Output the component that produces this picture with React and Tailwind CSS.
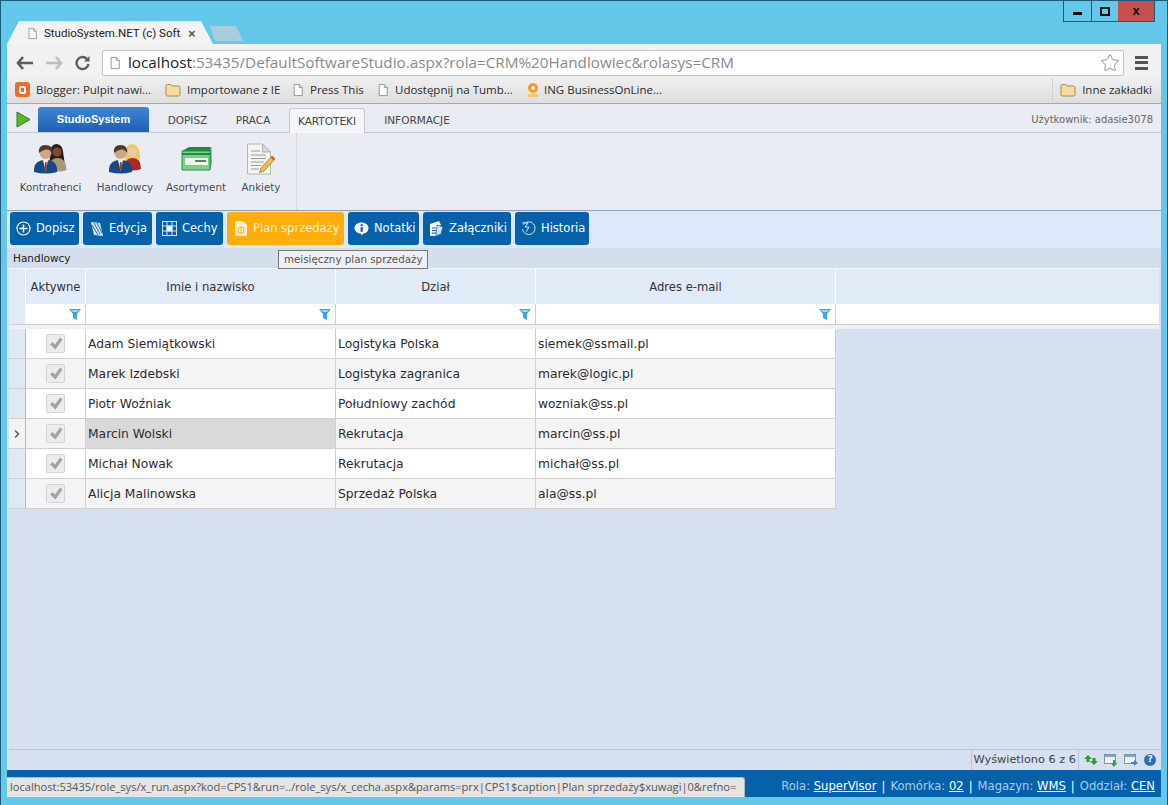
import { ChevronRight, Star } from "lucide-react"

const ui = "font-['Open_Sans','Noto_Sans',sans-serif]"
const app = "font-['DejaVu_Sans',sans-serif]"

const rows = [
  ["Adam Siemiątkowski", "Logistyka Polska", "siemek@ssmail.pl"],
  ["Marek Izdebski", "Logistyka zagranica", "marek@logic.pl"],
  ["Piotr Woźniak", "Południowy zachód", "wozniak@ss.pl"],
  ["Marcin Wolski", "Rekrutacja", "marcin@ss.pl"],
  ["Michał Nowak", "Rekrutacja", "michał@ss.pl"],
  ["Alicja Malinowska", "Sprzedaż Polska", "ala@ss.pl"],
]

function PageIcon({ size = 14 }) {
  return (
    <svg width={size} height={size + 2} viewBox="0 0 14 16" className="shrink-0">
      <path d="M2.5 1.5h6l3.500 3.500v9.500h-9.500z" fill="#fafafa" stroke="#8a8a8a" />
      <path d="M8.500 1.500v3.500h3.500" fill="#e8e8e8" stroke="#8a8a8a" />
    </svg>
  )
}

function FolderIcon() {
  return (
    <svg width="16" height="14" viewBox="0 0 16 14" className="shrink-0">
      <path d="M1 3q0-1.500 1.500-1.500h3l1.500 1.500h6.500q1.500 0 1.500 1.500v7q0 1.500-1.500 1.500h-11q-1.500 0-1.500-1.500z" fill="#f6dc9c" stroke="#a6894e" />
    </svg>
  )
}

function Bookmark({ icon, label, className = "" }) {
  return (
    <div className={"flex items-center gap-[6px] shrink-0 " + className}>
      {icon}
      <span className="text-[11.500px] text-[#2b2b2b] whitespace-nowrap">{label}</span>
    </div>
  )
}

function PeopleIcon({ blond }) {
  return (
    <svg width="33" height="31" viewBox="0 0 33 31">
      {blond ? (
        <>
          <path d="M16 13q0-12 7-12t8 12l-1 6h-13z" fill="#e9c764" />
          <circle cx="23.500" cy="9" r="4.500" fill="#eec9a8" />
          <path d="M15 26q0-11 8.500-11t8.500 11q-8 3-17 0z" fill="#a82a2a" />
        </>
      ) : (
        <>
          <path d="M16 12q0-11 6.500-11t7 11l1 7h-15z" fill="#2c1d18" />
          <circle cx="23" cy="9" r="4.500" fill="#7a4a32" />
          <path d="M15 27q0-12 8.500-12t9 12q-8 3-17.500 0z" fill="#a89878" />
        </>
      )}
      <circle cx="11.500" cy="10" r="6" fill="#d2a386" />
      <path d="M5 10q-1-8 6.500-8t6.500 8q-2-4-6-3.500t-7 3.500z" fill="#4a3a30" />
      <path d="M0 29q-1-12 11.500-12t11.500 12q-11 3-23 0z" fill="#174a84" />
      <path d="M9 17h5l-2.500 11z" fill="#eef2f6" />
      <path d="M11 19h1.500l.5 6-1.200 2-1.300-2z" fill="#b02f2f" />
    </svg>
  )
}

function BoxIcon() {
  return (
    <svg width="31" height="25" viewBox="0 0 31 25">
      <path d="M1 5l7-4h22l-1 4z" fill="#1f8a45" />
      <path d="M1 5h28v19h-28z" fill="#7bd088" stroke="#2c8c4a" />
      <path d="M29 5l1.500-4v17l-1.500 6z" fill="#2f9a52" />
      <rect x="1" y="7" width="28" height="2" fill="#1f8a45" />
      <rect x="4" y="12" width="23" height="7" fill="#eef8ea" />
      <rect x="14" y="14" width="11" height="2" fill="#5c7d66" />
    </svg>
  )
}

function DocIcon() {
  return (
    <svg width="30" height="32" viewBox="0 0 30 32">
      <path d="M1.500 1h15l8 8v22h-23z" fill="#f4f4f4" stroke="#b5b5b5" />
      <path d="M16.500 1v8h8z" fill="#d8d8d8" stroke="#b5b5b5" />
      <path d="M5 8h9M5 12h15M5 15.500h15M5 19h13M5 22.500h10M5 26h8" stroke="#9a9a9a" />
      <path d="M26 13l3 3-11 12-4.500 1.500 1.500-4.500z" fill="#f0c040" stroke="#8a6a20" strokeWidth=".7" />
      <path d="M26 13l3 3-1.500 1.500-3-3z" fill="#d8584c" />
    </svg>
  )
}

function RibbonItem({ icon, label, className = "" }) {
  return (
    <div className={"flex flex-col items-center " + className}>
      <div className="h-[32px] flex items-start justify-center">{icon}</div>
      <span className="mt-[5px] text-[10.300px] text-[#4a4a4a] whitespace-nowrap">{label}</span>
    </div>
  )
}

const btnIcons = {
  plus: (
    <svg width="15" height="15" viewBox="0 0 15 15" fill="none" stroke="#fff" strokeWidth="1.200">
      <circle cx="7.500" cy="7.500" r="6.500" />
      <path d="M7.500 3.500v8M3.500 7.500h8" strokeWidth="1.500" />
    </svg>
  ),
  edit: (
    <svg width="14" height="16" viewBox="0 0 14 16">
      <path d="M1 1l9 1 3 13-9-1z" fill="#d6e6f4" />
      <path d="M4 2l6 11M7 2l5 10M2 4l6 10" stroke="#1f6fb0" />
    </svg>
  ),
  grid: (
    <svg width="15" height="15" viewBox="0 0 15 15" fill="none" stroke="#cfe3f3">
      <rect x=".5" y=".5" width="14" height="14" />
      <path d="M5 .5v14M10 .5v14M.5 5h14M.5 10h14" />
      <rect x="5" y="5" width="5" height="5" fill="#fff" />
    </svg>
  ),
  plan: (
    <svg width="12" height="15" viewBox="0 0 12 15">
      <path d="M0 0h8l4 4v11h-12z" fill="#fdf0cf" />
      <circle cx="6" cy="9" r="3" fill="none" stroke="#ffad0d" />
      <path d="M6 7.500v3" stroke="#ffad0d" />
    </svg>
  ),
  note: (
    <svg width="16" height="16" viewBox="0 0 16 16">
      <path d="M8 1c4 0 7.500 2.500 7.500 6s-3 6-6 6l-1.500 2.500v-2.500c-4 0-7.500-2.500-7.500-6s3.500-6 7.500-6z" fill="#fff" />
      <rect x="7" y="6" width="2.400" height="5" fill="#0561aa" />
      <rect x="7" y="3" width="2.400" height="2" fill="#0561aa" />
    </svg>
  ),
  clip: (
    <svg width="15" height="17" viewBox="0 0 15 17">
      <path d="M1 4l9-3 2 4-4 2v9l-7 0z" fill="#fff" />
      <path d="M8 5l6 2-2 7-5 2z" fill="#cfe3f3" stroke="#0561aa" strokeWidth=".7" />
      <path d="M3 8h4M3 10.500h4M3 13h4" stroke="#0561aa" />
    </svg>
  ),
  hist: (
    <svg width="16" height="16" viewBox="0 0 16 16" fill="none" stroke="#e4eff8">
      <path d="M2.500 3.500a6.800 6.800 0 1 1-1 4.500" />
      <path d="M1 1.500h6.500l-3 4.500h4l-3 5" />
    </svg>
  ),
}

function ActionBtn({ icon, label, width, active }) {
  return (
    <div className={"h-[33px] rounded-[3px] flex items-center pl-[6px] gap-[5px] text-[11.500px] " + width + " " + (active ? "bg-[#ffad0d] text-[#fdf3dc]" : "bg-[#0561aa] text-white")}>
      <span className="w-[15px] flex justify-center">{btnIcons[icon]}</span>
      <span className="whitespace-nowrap">{label}</span>
    </div>
  )
}

function Funnel() {
  return (
    <svg width="12" height="11" viewBox="0 0 12 11" className="absolute right-[4px] top-[5px]">
      <path d="M0 0h12l-4 5v6l-4-2v-4z" fill="#3aa6dc" />
      <path d="M2 1h8l-2 2h-4z" fill="#9bdcf5" />
    </svg>
  )
}

function HeadCell({ label, width }) {
  return (
    <div className={"shrink-0 h-full pt-[2px] flex items-center justify-center border-r border-white text-[11.600px] text-[#333] " + width}>{label}</div>
  )
}

function FilterCell({ width }) {
  return <div className={"relative shrink-0 h-full bg-white border-r border-[#d0d0d0] " + width}><Funnel /></div>
}

function GridRow({ row, index }) {
  const selected = index === 3
  const bg = index % 2 === 1 ? "bg-[#f4f4f4]" : "bg-white"
  return (
    <div className={"flex h-[30px] text-[12.300px] text-[#2c2c2c] border-b border-[#d0d0d0] " + bg}>
      <div className={"w-[17px] shrink-0 flex items-center justify-center border-r border-[#a9bcd4] " + (selected ? "bg-[#f2f2f2]" : "bg-[#dfe9f6]")}>
        {selected && <ChevronRight size={12} strokeWidth={3} className="text-[#555]" />}
      </div>
      <div className="w-[60px] shrink-0 flex items-center justify-center border-r border-[#d0d0d0]">
        <div className="w-[19px] h-[19px] -mt-[1px] rounded-[2px] border border-[#d4d4d4] bg-[#ececec] flex items-center justify-center">
          <svg width="14" height="13" viewBox="0 0 14 13"><path d="M1 7.500l2.500-2.500 2.500 2.500 5-7 2.500 2-7 10z" fill="#a3a3a3" /></svg>
        </div>
      </div>
      <div className={"w-[250px] shrink-0 flex items-center pl-[2px] pt-[1px] border-r border-[#d0d0d0] " + (selected ? "bg-[#d9d9d9]" : "")}>{row[0]}</div>
      <div className="w-[200px] shrink-0 flex items-center pl-[2px] pt-[1px] border-r border-[#d0d0d0]">{row[1]}</div>
      <div className="w-[300px] shrink-0 flex items-center pl-[2px] pt-[1px] border-r border-[#d0d0d0]">{row[2]}</div>
    </div>
  )
}

export default function App() {
  return (
    <div className="relative w-[1168px] h-[805px] overflow-hidden flex flex-col bg-[#64c8ea] border border-[#1d5a78] border-b-0">
      {/* okno */}
      <div className="h-[43px] shrink-0 flex justify-between">
        <div className="flex items-end pl-[6px]">
          <div className="w-[206px] h-[23px] pt-[2px] bg-[#f3f3f3] [clip-path:polygon(0_100%,12px_0,194px_0,206px_100%)] flex items-center pl-[20px]">
            <PageIcon size={11} />
            <span className="ml-[6px] w-[122px] font-['Roboto',sans-serif] text-[11.500px] text-[#222] whitespace-nowrap">StudioSystem.NET (c) Soft</span>
            <span className="ml-[22px] text-[13px] font-bold text-[#555] font-['Liberation_Sans',sans-serif]">×</span>
          </div>
          <div className="w-[33px] h-[15px] -ml-[3px] mb-[3px] bg-[#a9cde0] [clip-path:polygon(0_0,26px_0,33px_100%,5px_100%)]" />
        </div>
        <div className="flex h-[21px] mr-[12px] border border-t-0 border-[#1d5a78] font-['Liberation_Sans',sans-serif]">
          <div className="w-[28px] flex items-center justify-center border-r border-[#1d5a78]">
            <div className="w-[9px] h-[3px] mt-[5px] bg-[#111]" />
          </div>
          <div className="w-[26px] flex items-center justify-center">
            <div className="w-[10px] h-[9px] border-2 border-[#111]" />
          </div>
          <div className="w-[36px] bg-[#c7504c] flex items-center justify-center text-[13px] font-bold text-[#111]">x</div>
        </div>
      </div>

      <div className="flex-1 min-h-0 mx-[6px] flex flex-col bg-[#d6e0ef] rounded-t-[3px]">
        {/* pasek adresu */}
        <div className={"h-[32px] shrink-0 bg-[#f1f1f1] flex items-center pt-[5px] pl-[9px] " + ui}>
          <svg width="18" height="14" viewBox="0 0 18 14"><path d="M7 1L2 7l5 6M2 7h15" fill="none" stroke="#5c5c5c" strokeWidth="2.600" /></svg>
          <svg width="18" height="14" viewBox="0 0 18 14" className="ml-[11px]"><path d="M11 1l5 6-5 6M16 7H1" fill="none" stroke="#bdbdbd" strokeWidth="2.600" /></svg>
          <svg width="16" height="16" viewBox="0 0 16 16" className="ml-[12px]"><path d="M13.500 9a6 6 0 1 1-1.500-5" fill="none" stroke="#5c5c5c" strokeWidth="2.400" /><path d="M14.500 1v5.500h-5.500z" fill="#5c5c5c" /></svg>
          <div className="ml-[11px] w-[1022px] h-[26px] bg-white border border-[#c4c4c4] rounded-[2px] flex items-center pl-[6px] gap-[7px]">
            <PageIcon size={12} />
            <span className="text-[15.250px] text-[#8a8a8a] whitespace-nowrap flex-1 leading-none"><span className="text-[#222]">localhost</span>:53435/DefaultSoftwareStudio.aspx?rola=CRM%20Handlowiec&rolasys=CRM</span>
            <Star size={20} strokeWidth={1} className="text-[#7a7a7a] mr-[3px]" />
          </div>
          <div className="ml-[11px] flex flex-col gap-[2.500px]">
            <div className="w-[13px] h-[3px] bg-[#555]" />
            <div className="w-[13px] h-[3px] bg-[#555]" />
            <div className="w-[13px] h-[3px] bg-[#555]" />
          </div>
        </div>

        {/* zakladki */}
        <div className={"h-[28px] shrink-0 flex items-center bg-gradient-to-b from-[#f0f0f0] to-[#dedede] border-b border-[#a8a8a8] pl-[8px] " + ui}>
          <Bookmark className="w-[150px]" label="Blogger: Pulpit nawi..." icon={<span className="w-[15px] h-[15px] rounded-[3px] bg-[#ef6c28] flex items-center justify-center"><span className="w-[7px] h-[8px] border-2 border-white rounded-[2px]" /></span>} />
          <Bookmark className="w-[127px]" label="Importowane z IE" icon={<FolderIcon />} />
          <Bookmark className="w-[85px]" label="Press This" icon={<PageIcon size={12} />} />
          <Bookmark className="w-[148px]" label="Udostępnij na Tumb..." icon={<PageIcon size={12} />} />
          <Bookmark label="ING BusinessOnLine..." icon={<svg width="16" height="16" viewBox="0 0 16 16" className="-mr-[3px]"><circle cx="8" cy="6" r="5" fill="#f59a23" /><circle cx="8" cy="6" r="2" fill="#fff" /><rect x="3" y="12" width="10" height="3" fill="#f7c46f" /></svg>} />
          <div className="ml-auto flex items-center mr-[9px] pl-[7px] border-l border-[#d0d0d0] h-[24px]">
            <Bookmark label="Inne zakładki" icon={<FolderIcon />} />
          </div>
        </div>

        {/* wstazka */}
        <div className={"h-[29px] shrink-0 flex items-end bg-[#e9edf3] border-b border-[#c3c8cf] pl-[9px] text-[10.500px] text-[#444] " + app}>
          <svg width="15" height="17" viewBox="0 0 15 17" className="mb-[4px]"><path d="M1 1l13 7.500-13 7.500z" fill="#58b82e" stroke="#2f7d1c" /></svg>
          <div className="ml-[7px] w-[111px] h-[25px] rounded-t-[3px] bg-gradient-to-b from-[#3f86d8] to-[#1d5fb0] text-white font-bold text-[11px] font-['Liberation_Sans',sans-serif] flex items-center justify-center">StudioSystem</div>
          <div className="w-[77px] h-[25px] pt-[2px] flex items-center justify-center">DOPISZ</div>
          <div className="w-[63px] h-[25px] pt-[2px] pr-[9px] flex items-center justify-center">PRACA</div>
          <div className="w-[76px] h-[25px] -mb-px pt-[2px] rounded-t-[3px] bg-[#f4f6f9] border border-b-0 border-[#c3c8cf] flex items-center justify-center">KARTOTEKI</div>
          <div className="w-[104px] h-[25px] pt-[2px] flex items-center justify-center">INFORMACJE</div>
          <div className="ml-auto h-[25px] mr-[8px] flex items-center text-[10px] text-[#666]">Użytkownik: adasie3078</div>
        </div>
        <div className={"h-[78px] shrink-0 flex bg-[#e9edf3] border-b border-[#8fa1b3] " + app}>
          <div className="w-[290px] flex pt-[10px] border-r border-[#d6dae0]">
            <RibbonItem className="w-[79px] pl-[8px]" icon={<PeopleIcon />} label="Kontrahenci" />
            <RibbonItem className="w-[78px]" icon={<PeopleIcon blond />} label="Handlowcy" />
            <RibbonItem className="w-[64px]" icon={<div className="pt-[3px]"><BoxIcon /></div>} label="Asortyment" />
            <RibbonItem className="w-[66px]" icon={<DocIcon />} label="Ankiety" />
          </div>
        </div>

        {/* przyciski */}
        <div className={"h-[37px] shrink-0 flex items-start pt-[1px] gap-[4px] pl-[3px] bg-[#dbe9fb] " + app}>
          <ActionBtn icon="plus" label="Dopisz" width="w-[69px]" />
          <ActionBtn icon="edit" label="Edycja" width="w-[69px]" />
          <ActionBtn icon="grid" label="Cechy" width="w-[67px]" />
          <ActionBtn icon="plan" label="Plan sprzedaży" width="w-[117px]" active />
          <ActionBtn icon="note" label="Notatki" width="w-[71px]" />
          <ActionBtn icon="clip" label="Załączniki" width="w-[88px]" />
          <ActionBtn icon="hist" label="Historia" width="w-[74px]" />
        </div>

        {/* siatka */}
        <div className={"flex-1 min-h-0 flex flex-col pl-[2px] " + app}>
          <div className="-ml-[2px] h-[20px] shrink-0 pt-[1px] flex items-center pl-[6px] bg-[#d2deec] text-[10.500px] text-[#222]">Handlowcy</div>
          <div className="h-px shrink-0 -ml-[2px] bg-[#f0f4fa]" />
          <div className="h-[35px] shrink-0 flex bg-[#e1eaf7] mr-[2px]">
            <HeadCell width="w-[17px]" label="" />
            <HeadCell width="w-[60px]" label="Aktywne" />
            <HeadCell width="w-[250px]" label="Imie i nazwisko" />
            <HeadCell width="w-[200px]" label="Dział" />
            <HeadCell width="w-[300px]" label="Adres e-mail" />
          </div>
          <div className="h-[21px] shrink-0 flex border-b border-[#cfcfcf] mr-[2px]">
            <div className="w-[17px] shrink-0 bg-[#e1eaf7] border-r border-white" />
            <FilterCell width="w-[60px]" />
            <FilterCell width="w-[250px]" />
            <FilterCell width="w-[200px]" />
            <FilterCell width="w-[300px]" />
            <div className="flex-1 bg-white" />
          </div>
          <div className="h-[4px] shrink-0 mr-[2px] bg-[#edf0f5]" />
          <div className="w-[827px] shrink-0">
            {rows.map((row, i) => (
              <GridRow key={row[0]} row={row} index={i} />
            ))}
          </div>
          <div className="flex-1" />
          <div className="h-[21px] shrink-0 flex items-center justify-end border-t border-[#b4c4da] text-[11.300px] text-[#444]">
            <div className="h-full flex items-center pl-[2px] border-l border-[#b4c4da] pr-[2px]">Wyświetlono 6 z 6</div>
            <div className="h-full flex items-center gap-[6px] pl-[5px] pr-[5px] border-l border-[#b4c4da]">
              <svg width="14" height="12" viewBox="0 0 14 12"><path d="M4 1L0 5h2.500v3h3V5H8zM10 11l4-4h-2.500V4h-3v3H6z" fill="#2f9a3c" /></svg>
              <svg width="14" height="13" viewBox="0 0 14 13"><rect x=".5" y=".5" width="11" height="9" fill="#eef3f8" stroke="#7f93a8" /><rect x="1" y="1" width="10" height="2" fill="#7fa3c8" /><path d="M9 6v3H6.500l3.500 4 3.500-4H11V6z" fill="#3aa14a" /></svg>
              <svg width="14" height="13" viewBox="0 0 14 13"><rect x=".5" y=".5" width="11" height="9" fill="#eef3f8" stroke="#7f93a8" /><rect x="1" y="1" width="10" height="2" fill="#7fa3c8" /><path d="M7 8h3V6l4 3-4 3v-2H7z" fill="#4a7fc0" /></svg>
              <span className="w-[12px] h-[12px] rounded-full bg-[#2a6fc4] text-white text-[9px] font-bold flex items-center justify-center">?</span>
            </div>
          </div>
          <div className="-ml-[2px] h-[27px] shrink-0 bg-[#0561aa] flex items-center justify-end pt-[7px] pr-[6px] text-[11.600px] text-[#a9cdea]">
            <span>Rola: <span className="text-white underline">SuperVisor</span></span>
            <span className="mx-[5px] text-white">|</span>
            <span>Komórka: <span className="text-white underline">02</span></span>
            <span className="mx-[5px] text-white">|</span>
            <span>Magazyn: <span className="text-white underline">WMS</span></span>
            <span className="mx-[5px] text-white">|</span>
            <span>Oddział: <span className="text-white underline">CEN</span></span>
          </div>
        </div>
      </div>
      <div className="h-[8px] shrink-0" />

      {/* dymek */}
      <div className={"absolute left-[277px] top-[249px] h-[19px] px-[5px] flex items-center bg-[#eef0f3] border border-[#767676] text-[10.300px] text-[#555] whitespace-nowrap " + app}>meisięczny plan sprzedaży</div>
      {/* status linku */}
      <div className={"absolute left-[6px] top-[776px] w-[738px] h-[20px] pl-[3px] flex items-center bg-[#e4e4e4] border-t border-r border-[#b5b5b5] rounded-tr-[3px] text-[11.100px] text-[#555] whitespace-nowrap " + ui}>localhost:53435/role_sys/x_run.aspx?kod=CPS1&run=../role_sys/x_cecha.aspx&params=prx|CPS1$caption|Plan sprzedaży$xuwagi|0&refno=</div>
    </div>
  )
}
